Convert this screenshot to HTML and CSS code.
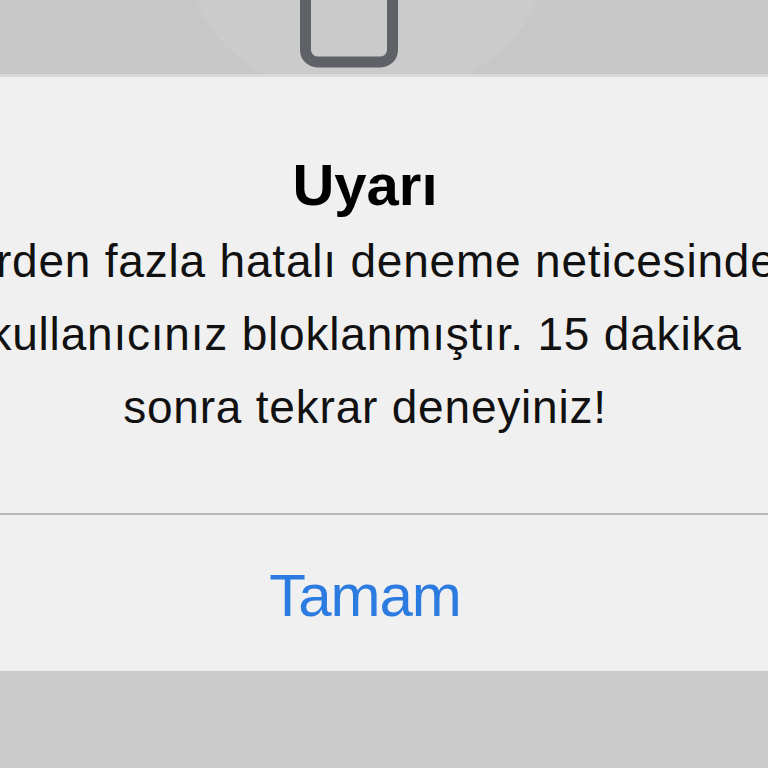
FILE: index.html
```html
<!DOCTYPE html>
<html lang="tr">
<head>
<meta charset="utf-8">
<link rel="stylesheet" href="styles.css">
</head>
<body>
<div class="page">
  <div class="topbar">
    <svg class="topart" width="768" height="76" viewBox="0 0 768 76">
      <ellipse cx="366" cy="-40" rx="178" ry="140" fill="#cbcbcb"/>
      <rect x="305.5" y="-30" width="87" height="92" rx="12" ry="12" fill="#cacaca" stroke="#5e6165" stroke-width="11"/>
    </svg>
  </div>
  <div class="alert">
    <div class="body">
      <div class="title">Uyarı</div>
      <div class="message">
        <span class="line">Birden fazla hatalı deneme neticesinde</span>
        <span class="line">kullanıcınız bloklanmıştır. 15 dakika</span>
        <span class="line">sonra tekrar deneyiniz!</span>
      </div>
    </div>
    <div class="divider"></div>
    <div class="actions">
      <span class="btn">Tamam</span>
    </div>
  </div>
</div>
</body>
</html>
```
FILE: styles.css
```css
html, body {
  margin: 0;
  padding: 0;
  width: 768px;
  height: 768px;
  overflow: hidden;
  background: #cbcbcb;
  font-family: "Liberation Sans", Arial, sans-serif;
}
.page {
  width: 768px;
  height: 768px;
  display: flex;
  flex-direction: column;
}
.topbar {
  height: 74px;
  background: #c7c7c7;
  overflow: hidden;
  border-bottom: 3px solid #d9d9d9;
}
.topart {
  display: block;
}
.alert {
  background: #f0f0f0;
  display: flex;
  flex-direction: column;
}
.body {
  padding: 73px 38px 69px 0;
  display: flex;
  flex-direction: column;
  align-items: center;
}
.title {
  font-size: 58px;
  line-height: 70px;
  font-weight: bold;
  color: #000;
  white-space: nowrap;
}
.message {
  margin-top: 5px;
  display: flex;
  flex-direction: column;
  align-items: center;
  width: 100%;
}
.line {
  font-size: 46px;
  line-height: 73px;
  letter-spacing: 0.8px;
  color: #111;
  white-space: nowrap;
}
.divider {
  height: 2px;
  background: #b7b7b7;
}
.actions {
  padding: 6px 38px 0 0;
  height: 150px;
  display: flex;
  justify-content: center;
}
.btn {
  font-size: 60px;
  line-height: 150px;
  letter-spacing: -1px;
  color: #2b7be0;
}
```
